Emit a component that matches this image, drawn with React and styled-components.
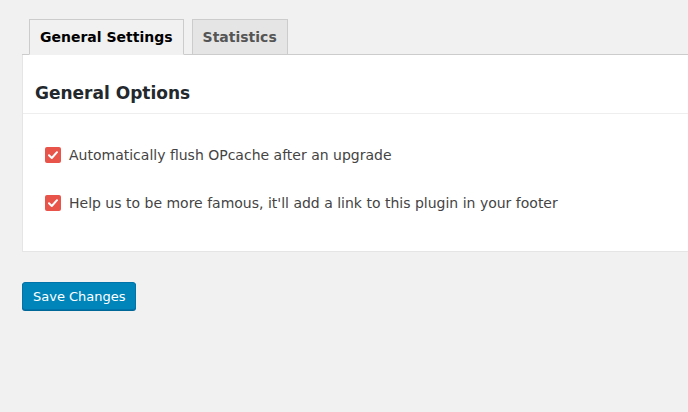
import React from "react";
import styled, { createGlobalStyle } from "styled-components";

const Global = createGlobalStyle`
  html, body { margin: 0; padding: 0; background: #f1f1f1; overflow: hidden; }
  body { font-family: "DejaVu Sans", "Noto Sans", sans-serif; color: #444; }
`;

const Page = styled.div`
  width: 688px;
  height: 412px;
  padding: 19px 0 0 22px;
  box-sizing: border-box;
  overflow: hidden;
`;

const TabBar = styled.div`
  display: flex;
  align-items: flex-start;
  gap: 8px;
  padding-left: 7px;
  border-bottom: 1px solid #ccc;
  margin-right: -20px;
`;

const Tab = styled.div`
  height: 35px;
  box-sizing: border-box;
  padding: 0 10px;
  display: flex;
  align-items: center;
  font-size: 14px;
  font-weight: bold;
  border: 1px solid #ccc;
  border-bottom: none;
  margin-bottom: -1px;
  background: ${(p) => (p.active ? "#f1f1f1" : "#e5e5e5")};
  color: ${(p) => (p.active ? "#000" : "#555")};
  ${(p) => p.active && "border-bottom: 1px solid #f1f1f1; height: 36px;"}
`;

const Panel = styled.div`
  background: #fff;
  border: 1px solid #e5e5e5;
  border-top: none;
  margin-right: -20px;
`;

const PanelHeader = styled.h2`
  margin: 0;
  padding: 28px 12px 10px;
  font-size: 17px;
  font-weight: bold;
  color: #23282d;
  border-bottom: 1px solid #eee;
`;

const Options = styled.div`
  padding: 31px 22px 38px;
  display: flex;
  flex-direction: column;
  gap: 28px;
`;

const Row = styled.label`
  display: flex;
  align-items: center;
  gap: 8px;
  font-size: 14px;
  color: #444;
  height: 20px;
`;

const Box = styled.span`
  width: 16px;
  height: 16px;
  border-radius: 2px;
  background: #e8534a;
  display: inline-flex;
  align-items: center;
  justify-content: center;
`;

const Button = styled.button`
  margin-top: 30px;
  height: 28px;
  padding: 0 9px 0 10px;
  background: #0085ba;
  border: 1px solid #0073aa;
  border-radius: 3px;
  color: #fff;
  font-family: "DejaVu Sans", sans-serif;
  font-size: 13px;
  box-shadow: 0 1px 0 #006799;
`;

const Check = () => (
  <svg width="12" height="12" viewBox="0 0 12 12">
    <path d="M2 6.2 L4.8 9 L10 3.2" fill="none" stroke="#fff" strokeWidth="2" strokeLinecap="round" strokeLinejoin="round" />
  </svg>
);

export default function App() {
  return (
    <Page>
      <Global />
      <TabBar>
        <Tab active>General Settings</Tab>
        <Tab>Statistics</Tab>
      </TabBar>
      <Panel>
        <PanelHeader>General Options</PanelHeader>
        <Options>
          <Row><Box><Check /></Box>Automatically flush OPcache after an upgrade</Row>
          <Row><Box><Check /></Box>Help us to be more famous, it'll add a link to this plugin in your footer</Row>
        </Options>
      </Panel>
      <Button>Save Changes</Button>
    </Page>
  );
}
